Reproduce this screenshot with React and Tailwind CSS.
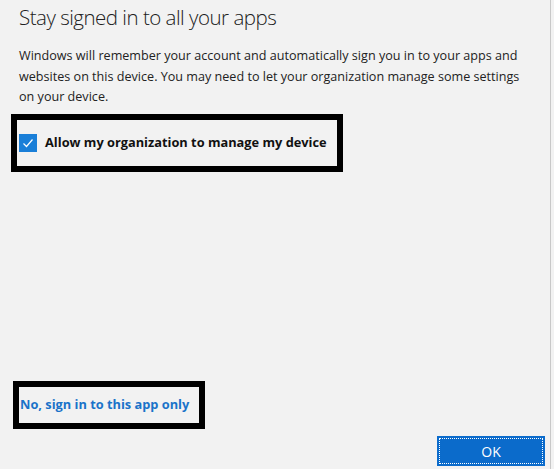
import React from "react";

export default function App() {
  return (
    <div className="w-[554px] h-[469px] bg-[#f2f2f2] flex flex-col relative overflow-hidden font-['Open_Sans',sans-serif] text-[#1a1a1a]">
      <div className="absolute right-[3px] top-0 bottom-0 w-px bg-[#c8c8c8]" />
      <div className="flex flex-col flex-1 pl-[19px] pr-[20px]">
        <h1 className="text-[20.5px] tracking-[-0.5px] font-light leading-[30px] mt-[2px] text-[#202020]">
          Stay signed in to all your apps
        </h1>
        <p className="mt-[14px] text-[12.6px] leading-[20.5px] text-[#222]">
          Windows will remember your account and automatically sign you in to your apps and websites on this device. You may need to let your organization manage some settings on your device.
        </p>
        <div className="mt-[6px] -ml-[8px] w-[332px] h-[58px] border-[6px] border-black flex items-center pl-[2px] gap-[8px]">
          <span className="w-[18px] h-[18px] bg-[#1a7fd8] flex items-center justify-center">
            <svg width="12" height="12" viewBox="0 0 12 12" fill="none">
              <path d="M1.5 6.5 L4.5 9.5 L10.5 2.5" stroke="white" strokeWidth="1.2" />
            </svg>
          </span>
          <span className="text-[12.8px] font-bold text-[#111]">Allow my organization to manage my device</span>
        </div>
        <div className="flex-1" />
      </div>
      <div className="flex items-end justify-between pl-[13px] pr-[9px] pb-[3px]">
        <div className="mb-[37px] w-[192px] h-[48px] border-[6px] border-black flex items-center">
          <span className="text-[12.8px] font-bold text-[#1a73c9] ml-[1px]">No, sign in to this app only</span>
        </div>
        <button className="w-[108px] h-[30px] bg-[#0b6bcb] p-[2px]">
          <span className="w-full h-full border border-dotted border-white flex items-center justify-center text-white text-[14px]">
            OK
          </span>
        </button>
      </div>
    </div>
  );
}
